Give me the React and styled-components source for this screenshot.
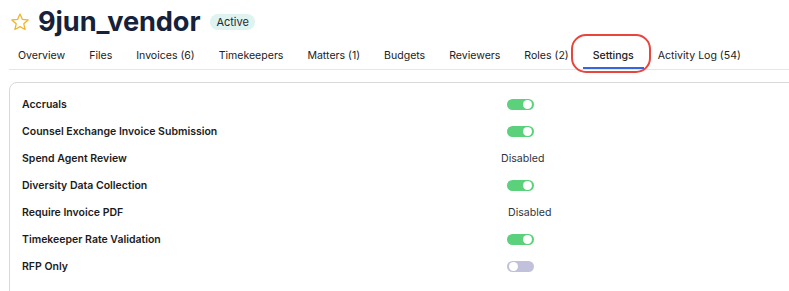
import React from "react";
import styled, { createGlobalStyle } from "styled-components";

const Global = createGlobalStyle`
  html, body { margin: 0; padding: 0; background: #fff; overflow: hidden; }
  body { font-family: Inter, "Noto Sans", sans-serif; color: #1c1c1c; }
  * { box-sizing: border-box; }
`;

const Page = styled.div`
  width: 789px;
  height: 291px;
  overflow: hidden;
`;

const Header = styled.div`
  display: flex;
  align-items: center;
  height: 44px;
  padding: 0 0 0 10px;
  gap: 8px;
`;

const Title = styled.h1`
  margin: 0;
  font-size: 27.2px;
  font-weight: 700;
  color: #16213a;
  letter-spacing: -0.1px;
  line-height: 1;
`;

const Badge = styled.span`
  margin-left: 2px;
  background: #dff3f1;
  color: #1f2a2a;
  font-size: 11px;
  border-radius: 8px;
  padding: 2px 6px;
  line-height: 12px;
`;

const Tabs = styled.nav`
  display: flex;
  margin-left: 9px;
  height: 26px;
  gap: 4px;
  border-bottom: 1px solid #e6e6e6;
`;

const Tab = styled.div`
  position: relative;
  padding: 0 10px 0 ${(p) => (p.$first ? "9px" : "10px")};
  font-size: 10.55px;
  color: #222;
  display: flex;
  align-items: center;
  height: 25px;
  border-bottom: 2px solid ${(p) => (p.$active ? "#3366e0" : "transparent")};
  font-weight: ${(p) => (p.$active ? 500 : 400)};
`;

const Highlight = styled.span`
  position: absolute;
  left: -12px;
  right: -7px;
  top: -10px;
  bottom: -6px;
  border: 2px solid #e8453c;
  border-radius: 15px;
  pointer-events: none;
`;

const Card = styled.section`
  margin: 12px 0 0 9px;
  width: 900px;
  height: 260px;
  border: 1px solid #d9d9d9;
  border-radius: 8px;
  padding: 8px 0 0 12px;
`;

const Row = styled.div`
  display: grid;
  grid-template-columns: 485px 60px;
  align-items: center;
  height: 27px;
`;

const Label = styled.div`
  font-size: 10.5px;
  font-weight: 600;
  color: #1c1c1c;
`;

const Value = styled.div`
  display: flex;
  align-items: center;
  margin-left: ${(p) => p.$shift || 0}px;
  font-size: 10.6px;
  color: #2e3440;
`;

const Toggle = styled.span`
  position: relative;
  width: 27px;
  height: 11px;
  border-radius: 6px;
  background: ${(p) => (p.$on ? "#5bd17c" : "#c1c1db")};
  &::after {
    content: "";
    position: absolute;
    top: 1px;
    ${(p) => (p.$on ? "right: 2px;" : "left: 2px;")}
    width: 9px;
    height: 9px;
    border-radius: 50%;
    background: #fff;
  }
`;

const Star = () => (
  <svg width="20" height="20" viewBox="0 0 24 24" fill="none" stroke="#f3b62b" strokeWidth="1.6" strokeLinejoin="round">
    <polygon points="12,2.5 14.9,8.9 21.8,9.6 16.6,14.2 18.1,21 12,17.5 5.9,21 7.4,14.2 2.2,9.6 9.1,8.9" />
  </svg>
);

const tabs = [
  "Overview",
  "Files",
  "Invoices (6)",
  "Timekeepers",
  "Matters (1)",
  "Budgets",
  "Reviewers",
  "Roles (2)",
  "Settings",
  "Activity Log (54)",
];

const rows = [
  { label: "Accruals", on: true },
  { label: "Counsel Exchange Invoice Submission", on: true },
  { label: "Spend Agent Review", text: "Disabled", shift: -6 },
  { label: "Diversity Data Collection", on: true },
  { label: "Require Invoice PDF", text: "Disabled", shift: 1 },
  { label: "Timekeeper Rate Validation", on: true },
  { label: "RFP Only", on: false },
];

export default function App() {
  return (
    <>
      <Global />
      <Page>
        <Header>
          <Star />
          <Title>9jun_vendor</Title>
          <Badge>Active</Badge>
        </Header>
        <Tabs>
          {tabs.map((t, i) => (
            <Tab key={t} $first={i === 0} $active={t === "Settings"}>
              {t}
              {t === "Settings" && <Highlight />}
            </Tab>
          ))}
        </Tabs>
        <Card>
          {rows.map((r) => (
            <Row key={r.label}>
              <Label>{r.label}</Label>
              <Value $shift={r.shift}>
                {r.text ? r.text : <Toggle $on={r.on} />}
              </Value>
            </Row>
          ))}
        </Card>
      </Page>
    </>
  );
}
